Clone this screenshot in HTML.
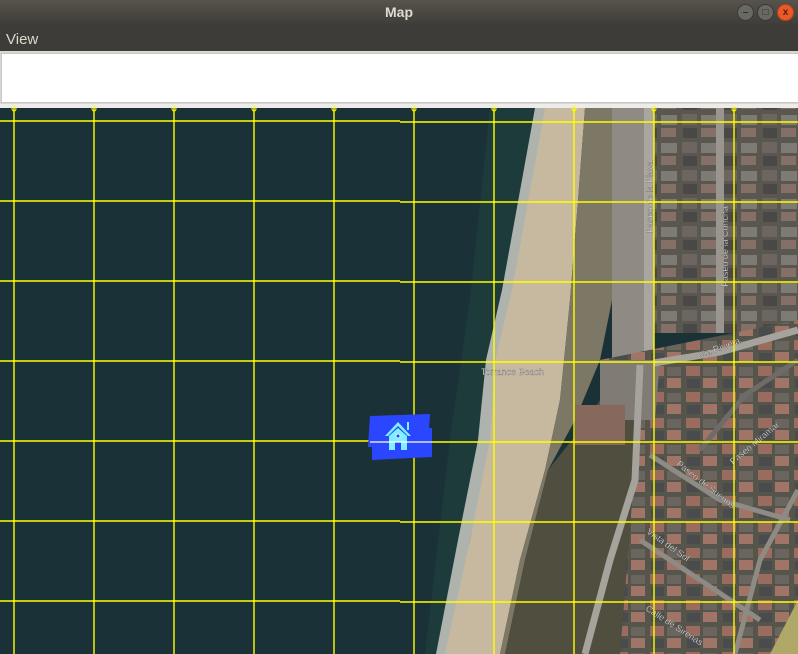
<!DOCTYPE html>
<html><head><meta charset="utf-8"><style>
html,body{margin:0;padding:0;width:798px;height:654px;overflow:hidden;background:#3d3c38;font-family:"Liberation Sans",sans-serif}
#title{position:absolute;left:0;top:0;width:798px;height:26px;background:linear-gradient(#57534c,#3e3c37);color:#dfdbd2;font-weight:bold;font-size:14px;text-align:center;line-height:25px}
.btn{position:absolute;top:4px;width:17px;height:17px;border-radius:50%;background:#6a6863;border:1px solid #3a3935;box-sizing:border-box;color:#2c2b28;font-size:10px;text-align:center;line-height:15px}
#menu{position:absolute;left:0;top:26px;width:798px;height:25px;background:#3d3c38;color:#dcd8ce;font-size:15px}
#menu span{position:absolute;left:6px;top:5px}
#box{position:absolute;left:0;top:51px;width:798px;height:53px;background:#d8d6d2}
#box div{position:absolute;left:1px;top:2px;right:0;height:48px;background:#fff;border:1px solid #c9c7c3;border-right:none}
#map{position:absolute;left:0;top:104px;width:798px;height:550px;background:#eeeceb}
</style></head><body>
<div id="title">Map
<div class="btn" style="left:737px">–</div><div class="btn" style="left:757px">□</div><div class="btn" style="left:777px;background:#e9592a;border-color:#b8431d;color:#5a1f0b">x</div></div>
<div id="menu"><span>View</span></div>
<div id="box"><div></div></div>
<svg id="map" width="798" height="550" viewBox="0 104 798 550" xmlns="http://www.w3.org/2000/svg">
<defs>
<pattern id="houses" width="40" height="28" patternUnits="userSpaceOnUse">
<rect width="40" height="28" fill="#5a5750"/>
<rect x="2" y="2" width="15" height="11" fill="#6d6660"/>
<rect x="21" y="3" width="16" height="10" fill="#7e7a74"/>
<rect x="3" y="16" width="14" height="10" fill="#4a4846"/>
<rect x="21" y="16" width="15" height="9" fill="#857068"/>
</pattern>
<pattern id="houses2" width="36" height="26" patternUnits="userSpaceOnUse">
<rect width="36" height="26" fill="#55554b"/>
<rect x="2" y="2" width="14" height="10" fill="#9a6c60"/>
<rect x="19" y="3" width="14" height="9" fill="#6a655f"/>
<rect x="3" y="15" width="13" height="9" fill="#4a4b4d"/>
<rect x="19" y="14" width="14" height="10" fill="#a07466"/>
</pattern>
</defs>
<rect x="0" y="108" width="798" height="546" fill="#1a3237"/>
<polygon points="490,108 560,108 520,300 490,440 455,654 425,654 450,440 470,300" fill="#1e3b3c"/>
<polygon points="535,108 548,108 515,290 495,360 492,440 470,540 448,654 436,654 458,540 478,440 486,360 502,290" fill="#aeb3ad"/>
<polygon points="545,108 585,108 578,200 570,300 560,400 545,470 520,560 500,654 445,654 470,540 490,440 495,360 512,290" fill="#c7b8a0"/>
<polygon points="585,108 615,108 612,300 600,360 575,420 548,470 525,560 505,654 500,654 520,560 545,470 560,400 570,300 578,200" fill="#7d7865"/>
<polygon points="548,470 580,430 600,400 640,400 620,654 505,654 525,560" fill="#4f4e3f"/>
<rect x="612" y="108" width="36" height="255" fill="#8f8a83"/>
<rect x="644" y="108" width="10" height="260" fill="#aaa59e"/>
<rect x="654" y="108" width="144" height="225" fill="url(#houses)"/>
<rect x="716" y="108" width="8" height="225" fill="#9a968f"/>
<polygon points="600,360 798,320 798,654 620,654 640,400" fill="url(#houses2)"/>
<polygon points="600,360 660,360 655,420 600,420" fill="#807b75"/>
<rect x="575" y="405" width="50" height="40" fill="#86685d"/>
<polyline points="654,363 720,352 798,330" stroke="#a6a29c" stroke-width="7" fill="none"/>
<polyline points="640,365 635,480 610,560 585,654" stroke="#a6a29c" stroke-width="7" fill="none"/>
<polyline points="650,455 720,500 790,520" stroke="#8e8a84" stroke-width="5" fill="none"/>
<polyline points="640,540 700,580 760,620" stroke="#8e8a84" stroke-width="5" fill="none"/>
<polyline points="700,450 745,395 798,360" stroke="#6f6c68" stroke-width="5" fill="none"/>
<polyline points="798,490 760,560 735,654" stroke="#8e8a84" stroke-width="5" fill="none"/>
<polygon points="770,654 798,600 798,654" fill="#b0a868"/>
<g font-family="Liberation Sans,sans-serif" font-size="9" fill="#fff" stroke="#333" stroke-width="0.25">
<text x="481" y="375">Torrance Beach</text>
<text transform="translate(653,233) rotate(-90)">Paseo de la Playa</text>
<text transform="translate(728,287) rotate(-90)">Paseo de la Concha</text>
<text transform="translate(700,358) rotate(-20)">Via Riviera</text>
<text transform="translate(733,465) rotate(-40)">Paseo Miramar</text>
<text transform="translate(676,465) rotate(38)">Paseo de Suenos</text>
<text transform="translate(646,533) rotate(35)">Vista del Sol</text>
<text transform="translate(645,610) rotate(33)">Calle de Sirenas</text>
</g>
<g stroke="#ffff00" stroke-width="1.4">
<line x1="14" y1="108" x2="14" y2="654"/><line x1="94" y1="108" x2="94" y2="654"/><line x1="174" y1="108" x2="174" y2="654"/><line x1="254" y1="108" x2="254" y2="654"/><line x1="334" y1="108" x2="334" y2="654"/><line x1="414" y1="108" x2="414" y2="654"/><line x1="494" y1="108" x2="494" y2="654"/><line x1="574" y1="108" x2="574" y2="654"/><line x1="654" y1="108" x2="654" y2="654"/><line x1="734" y1="108" x2="734" y2="654"/>
<line x1="0" y1="121" x2="400" y2="121"/><line x1="400" y1="122" x2="798" y2="122"/>
<line x1="0" y1="201" x2="400" y2="201"/><line x1="400" y1="202" x2="798" y2="202"/>
<line x1="0" y1="281" x2="400" y2="281"/><line x1="400" y1="282" x2="798" y2="282"/>
<line x1="0" y1="361" x2="400" y2="361"/><line x1="400" y1="362" x2="798" y2="362"/>
<line x1="0" y1="441" x2="400" y2="441"/><line x1="400" y1="442" x2="798" y2="442"/>
<line x1="0" y1="521" x2="400" y2="521"/><line x1="400" y1="522" x2="798" y2="522"/>
<line x1="0" y1="601" x2="400" y2="601"/><line x1="400" y1="602" x2="798" y2="602"/>
</g>
<g fill="none" stroke="#ffff00" stroke-width="1">
<circle cx="14" cy="109" r="2"/><circle cx="94" cy="109" r="2"/><circle cx="174" cy="109" r="2"/><circle cx="254" cy="109" r="2"/><circle cx="334" cy="109" r="2"/><circle cx="414" cy="109" r="2"/><circle cx="494" cy="109" r="2"/><circle cx="574" cy="109" r="2"/><circle cx="654" cy="109" r="2"/><circle cx="734" cy="109" r="2"/>
</g>
<polygon points="370,416 430,414 429,428 432,428 432,457 372,460 372,447 368,447" fill="#2a47ff"/>
<g fill="#7ff0ff">
<polygon points="398,422 385,436 388,436 398,426 408,436 411,436"/>
<rect x="407" y="422" width="2" height="8"/>
<polygon points="389,436 398,428 407,436 407,450 401,450 401,442 395,442 395,450 389,450"/>
</g>
<circle cx="398" cy="436" r="2" fill="#2a47ff" stroke="#fff" stroke-width="0.8"/>
<line x1="370" y1="442" x2="432" y2="442" stroke="#fff" stroke-width="1.3"/>
</svg>
</body></html>
